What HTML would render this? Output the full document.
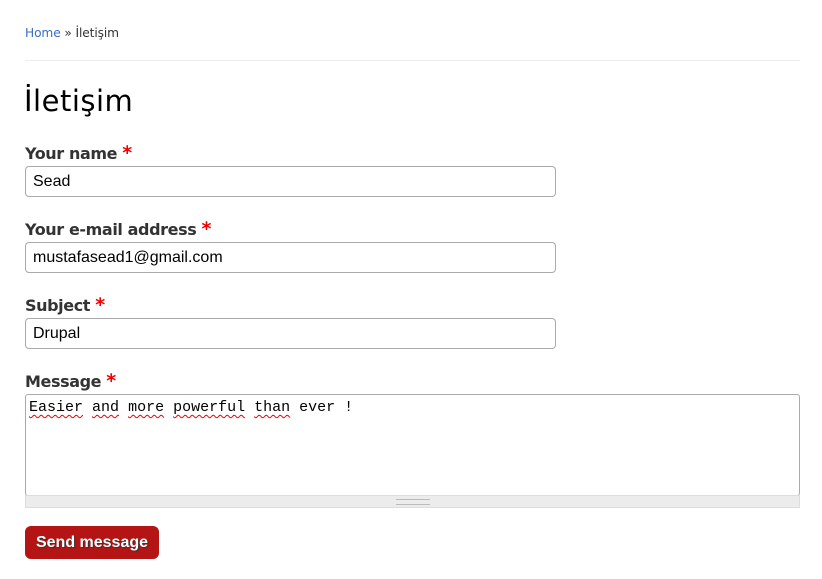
<!DOCTYPE html>
<html><head><meta charset="utf-8"><style>
body{margin:0;background:#fff;width:822px;height:579px;overflow:hidden;font-family:"DejaVu Sans","Liberation Sans",sans-serif;color:#3b3b3b}
.bc{position:absolute;left:25px;top:26px;font-size:12.2px;color:#333;letter-spacing:-0.1px}
.bc a{color:#3a6ec4;text-decoration:none}
.hr{position:absolute;left:25px;top:60px;width:775px;height:1px;background:#ececec}
h1{position:absolute;left:24px;top:84px;margin:0;font-weight:normal;font-size:29px;color:#000;letter-spacing:0.5px}
.lab{position:absolute;left:25px;font-weight:bold;font-size:16px;color:#333;letter-spacing:-0.4px}
.lab span{color:#e00;font-size:19px}
.in{position:absolute;left:25px;height:31px;border:1px solid #aaa;border-radius:4px;box-sizing:border-box;width:531px;font-family:"Liberation Sans",sans-serif;font-size:16px;color:#000;padding:6px 0 0 7px}
.ta{position:absolute;left:25px;top:394px;width:775px;height:102px;border:1px solid #aaa;border-radius:3px;box-sizing:border-box;font-family:"Liberation Mono",monospace;font-size:15px;padding:4px 3px;color:#000}
.ta u{text-decoration:underline wavy #e00;text-decoration-thickness:1px;text-underline-offset:3px}
.grip{position:absolute;left:25px;top:495px;width:775px;height:13px;background:#ececec;border:1px solid #ddd;box-sizing:border-box}
.grip i{position:absolute;left:370px;top:3px;width:34px;height:4px;border-top:1px solid #bbb;border-bottom:1px solid #bbb}
.btn{position:absolute;left:25px;top:526px;width:134px;height:33px;background:#b51414;border-radius:6px;color:#fff;font-family:"Liberation Sans",sans-serif;font-weight:bold;font-size:16px;line-height:33px;text-align:center;text-shadow:1px 1px 1px #333}
</style></head><body>
<div class="bc"><a>Home</a> » İletişim</div>
<div class="hr"></div>
<h1>İletişim</h1>
<div class="lab" style="top:142px">Your name <span>*</span></div>
<div class="in" style="top:166px">Sead</div>
<div class="lab" style="top:218px">Your e-mail address <span>*</span></div>
<div class="in" style="top:242px">mustafasead1@gmail.com</div>
<div class="lab" style="top:294px">Subject <span>*</span></div>
<div class="in" style="top:318px">Drupal</div>
<div class="lab" style="top:370px">Message <span>*</span></div>
<div class="ta"><u>Easier</u> <u>and</u> <u>more</u> <u>powerful</u> <u>than</u> ever !</div>
<div class="grip"><i></i></div>
<div class="btn">Send message</div>
</body></html>
